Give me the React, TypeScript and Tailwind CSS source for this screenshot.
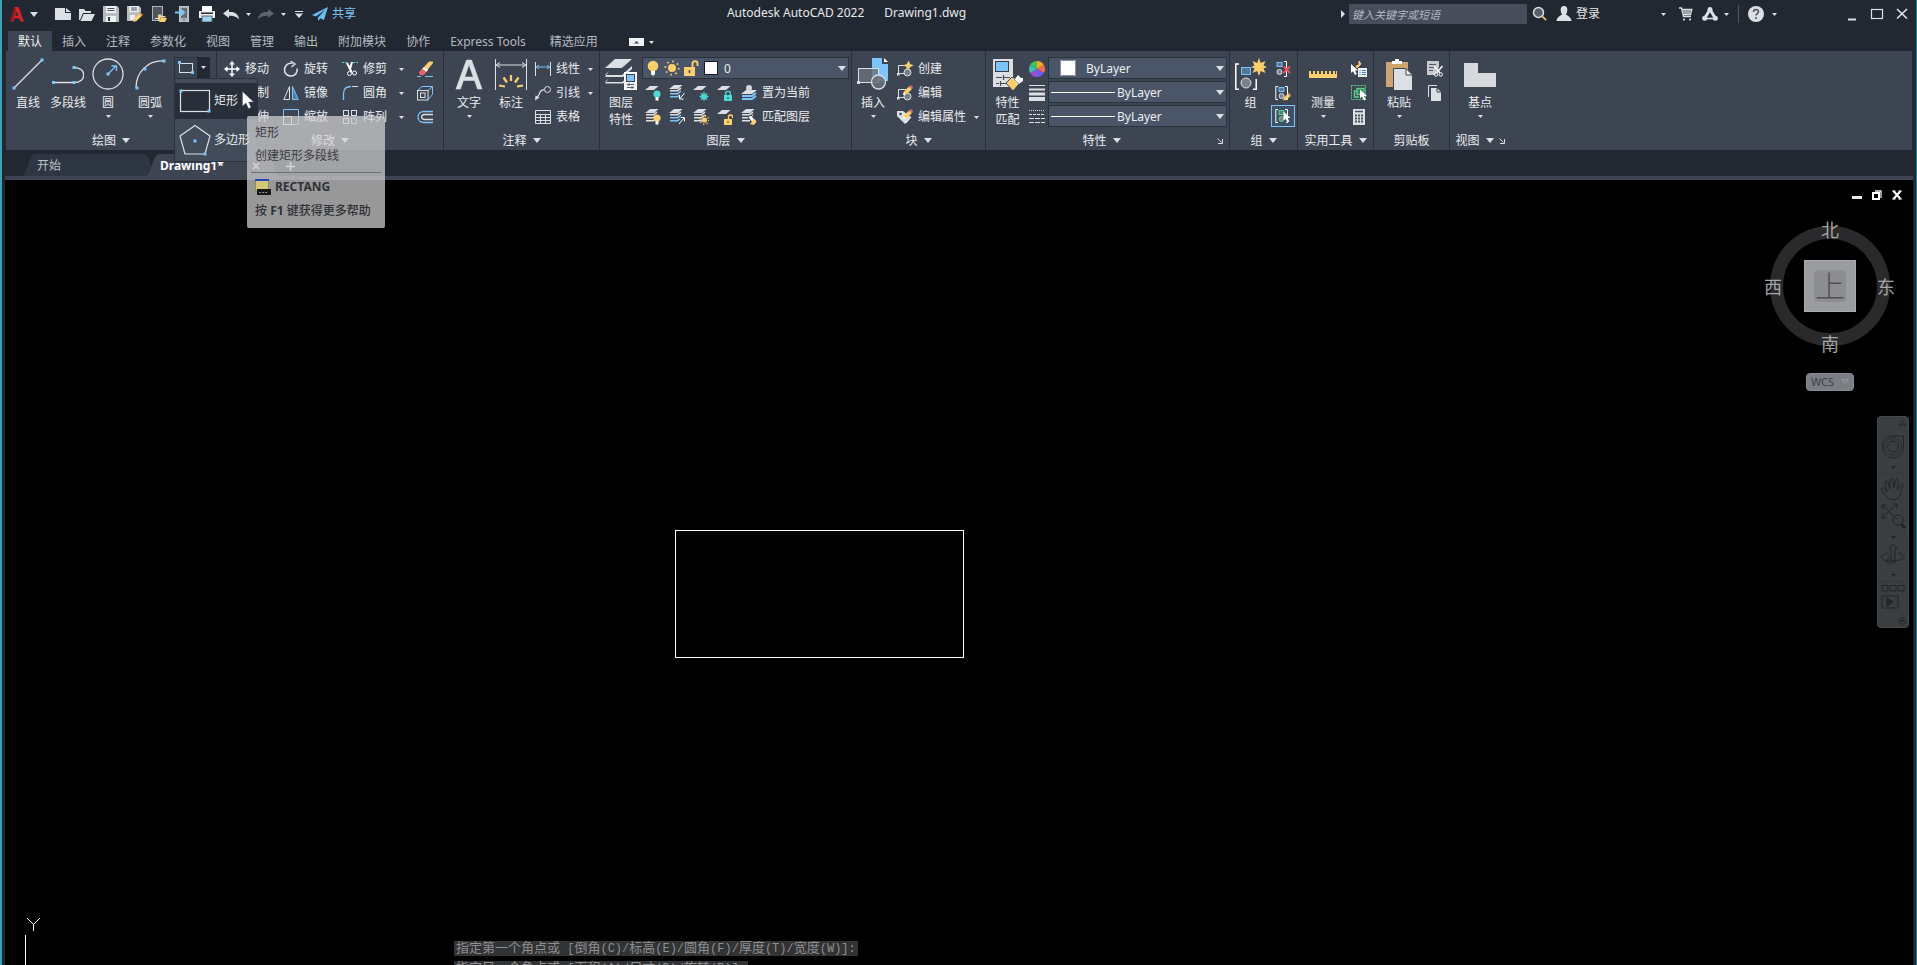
import React from "react";
import type { ReactNode } from "react";
import clsx from "clsx";

const LIGHT = "#dcdfe3";
const BLUE = "#7cc4fa";
const GOLD = "#fccf6e";
const TEAL = "#4fd6cf";
const GREEN = "#5bd08a";
const DARK = "#3e4552";

/* ---------- drawing helpers ---------- */

function Icon({ w = 16, h = w, children, className }: { w?: number; h?: number; children: ReactNode; className?: string }) {
  return (
    <svg width={w} height={h} viewBox={`0 0 ${w} ${h}`} fill="none" stroke={LIGHT} className={clsx("block shrink-0", className)} aria-hidden="true">
      {children}
    </svg>
  );
}

const Dot = ({ x, y }: { x: number; y: number }) => <rect x={x - 1.5} y={y - 1.5} width="3" height="3" fill={BLUE} stroke="none" />;

const Caret = ({ big = false }: { big?: boolean }) =>
  big ? (
    <Icon w={8} h={5}><path d="M0 0H8L4 5Z" fill={LIGHT} stroke="none" /></Icon>
  ) : (
    <Icon w={5} h={3}><path d="M0 0H5L2.5 3Z" fill={LIGHT} stroke="none" /></Icon>
  );

const Sheet = ({ y, fill = LIGHT }: { y: number; fill?: string }) => <path d={`M5 ${y}H13.5L9 ${y + 4}H0Z`} fill={fill} stroke="none" />;
const Stack = ({ blue = false }: { blue?: boolean }) => (
  <g>
    <Sheet y={0} />
    <path d="M1 5.7H8.6L12 3.2" strokeWidth="1.5" />
    <path d="M1 8.7H8.6L12 6" stroke={blue ? BLUE : LIGHT} strokeWidth="1.5" />
    <path d="M1 11.7H8.6L11 10" stroke={blue ? BLUE : LIGHT} strokeWidth="1.5" />
  </g>
);
const Bulb = ({ x, y, fill }: { x: number; y: number; fill: string }) => (
  <g stroke="none">
    <circle cx={x} cy={y} r="3.6" fill={fill} />
    <rect x={x - 1.5} y={y + 3} width="3" height="3.5" fill="#fff" />
  </g>
);
const Pencil = () => (
  <g stroke="none">
    <path d="M6 10L7 6.5L12 1.5L14.8 4.2L9.6 9.2Z" fill={GOLD} />
    <path d="M12 1.5L13.2 .4Q14 0 15 1L15.8 2Q16 2.6 15.6 3.2L14.8 4.2Z" fill="#ee6a5f" />
    <path d="M6 10L6.8 7.2L8.8 9.2Z" fill="#fff" />
  </g>
);
const Pointer = ({ x = 0, y = 0 }: { x?: number; y?: number }) => (
  <path d={`M${x} ${y}V${y + 9}L${x + 2} ${y + 7.2}L${x + 4} ${y + 11}L${x + 5.8} ${y + 10}L${x + 4} ${y + 6.4}H${x + 7}Z`} fill="#fff" stroke="none" />
);

/* ---------- title bar icons ---------- */

const LogoA = () => (
  <Icon w={14} h={15}>
    <path d="M4.6 0H8.6L14 14.6H10.3L9.2 11.2H4.5L3.4 14.6H0Z" fill="#d2232a" stroke="none" />
    <path d="M6.8 4.5L8.4 8.8H5.2Z" fill="#222831" stroke="none" />
    <path d="M4.6 0L0 14.6H2.2L6 4Z" fill="#8f171c" stroke="none" />
  </Icon>
);
const NewIcon = () => <Icon h={12}><path d="M0 0H10V5H16V12H0Z" fill={LIGHT} stroke="none" /><path d="M11 0L16 4H11Z" fill={LIGHT} stroke="none" /></Icon>;
const OpenIcon = () => <Icon h={13}><path d="M0 12V1H5L6.500 3H12V5H4L1 12Z" fill={LIGHT} stroke="none" /><path d="M4.600 6H16L12.500 13H1.500Z" fill={LIGHT} stroke="none" /></Icon>;
const Floppy = () => (
  <g stroke="none">
    <path d="M0 0H14L16 2V16H0Z" fill="#b9bdc3" />
    <rect x="3" y="0" width="10" height="7" fill="#f1f2f4" /><rect x="4.500" y="2" width="7" height="1" fill="#4a505c" /><rect x="4.500" y="4" width="7" height="1" fill="#4a505c" />
    <rect x="3" y="10" width="10" height="6" fill="#f1f2f4" /><rect x="5" y="11" width="2" height="4" fill="#30363f" />
  </g>
);
const SaveIcon = () => <Icon><Floppy /></Icon>;
const SaveAsIcon = () => (
  <Icon>
    <g stroke="none">
      <path d="M0 0H12L14 2V6L6 15H0Z" fill="#b9bdc3" /><rect x="2.500" width="9" height="6" fill="#f1f2f4" /><path d="M4 2H10M4 4H10" stroke="#4a505c" />
      <rect x="3" y="9" width="5" height="5" fill="#f1f2f4" />
      <path d="M6 16L7.200 12.500L12.500 7.200L15 9.700L9.600 15Z" fill={GOLD} /><path d="M12.500 7.200L13.600 6.200L16 8.700L15 9.700Z" fill="#ee8a4a" />
    </g>
  </Icon>
);
const OpenWebIcon = () => (
  <Icon w={16}>
    <rect x="1.500" y=".5" width="10" height="14" fill="#50565f" stroke="#aeb3ba" /><path d="M4 12.500H7" />
    <path d="M7 15V8.500H10L11 10H14.500V11.500H9.800L8 15Z" fill="#f4d39a" stroke="none" /><path d="M9.800 12H16L14 16H8Z" fill={GOLD} stroke="none" />
  </Icon>
);
const SaveWebIcon = () => (
  <Icon>
    <rect x="4.500" y=".5" width="9" height="15" fill="#aeb3ba" stroke="#c4c8cd" /><rect x="6" y="2" width="6" height="10" fill="#666d77" stroke="none" /><path d="M8 14H10" stroke="#50565f" />
    <path d="M0 5.500H6V2.500L10.500 6.500L6 10.500V7.500H0Z" fill={BLUE} stroke="none" />
  </Icon>
);
const PrintIcon = () => (
  <Icon>
    <g stroke="none"><rect x="3" width="10" height="5" fill="#fff" /><rect y="5" width="16" height="7" fill="#f1f2f4" /><rect x="2" y="6.500" width="12" height="1.500" fill="#222831" /><rect x="3" y="10" width="10" height="6" fill="#9ed4ef" stroke="#5a6370" /></g>
  </Icon>
);
const UndoIcon = ({ dim = false }: { dim?: boolean }) => (
  <Icon h={11} className={dim ? "-scale-x-100" : ""}>
    <path d="M0 4.500L6 0V3C12 2.500 15.500 5 16 10.500C13.500 7.500 11 6.500 6 6.700V9Z" fill={dim ? "#5f646c" : LIGHT} stroke="none" />
  </Icon>
);
const CustomizeIcon = () => <Icon w={8} h={7}><path d="M0 .5H8" /><path d="M0 2.500H8L4 7Z" fill={LIGHT} stroke="none" /></Icon>;
const PlaneIcon = () => <Icon h={14}><path d="M16 0L0 8L4 9.500L13.500 2.500L6 10.500V14L8.500 11.300L12 13Z" fill="#6cbcf4" stroke="none" /></Icon>;
const SearchIcon = () => <Icon><circle cx="6.500" cy="6.500" r="5" strokeWidth="1.500" fill="#5a6068" /><path d="M10.300 10.300L14 14" stroke="#d9c26a" strokeWidth="1.800" /></Icon>;
const UserIcon = () => <Icon><path d="M8 0C11 0 11.500 2.500 11.300 4.500C11.100 6.600 10.300 7.500 10 8.300C10 9.500 15 10 15.500 15H.5C1 10 6 9.500 6 8.300C5.700 7.500 4.900 6.600 4.700 4.500C4.500 2.500 5 0 8 0Z" fill={LIGHT} stroke="none" /></Icon>;
const CartIcon = () => <Icon w={14} h={14}><path d="M0 1H2.500L4.500 9.500H12M3 2.500H12.800L11.500 7.500H4" strokeWidth="1.300" /><path d="M3.500 3H12.300L11 7H4.500Z" fill="#9da1a8" stroke="none" /><circle cx="5" cy="12.500" r="1.100" fill={LIGHT} stroke="none" /><circle cx="11" cy="12.500" r="1.100" fill={LIGHT} stroke="none" /></Icon>;
const AppsIcon = () => <Icon h={14}><path d="M8 2.500L2.500 11.500M8 2.500L13.500 11.500" strokeWidth="3" /><path d="M2.500 11.500H13.500" strokeWidth="1.600" /><g fill={LIGHT} stroke="none"><circle cx="8" cy="2.500" r="2.500" /><circle cx="2.700" cy="11.300" r="2.500" /><circle cx="13.300" cy="11.300" r="2.500" /></g></Icon>;
const HelpIcon = () => <Icon><circle cx="8" cy="8" r="8" fill={LIGHT} stroke="none" /><path d="M5.500 6C5.500 2.800 10.500 2.800 10.500 5.800C10.500 7.700 8 7.600 8 9.600" stroke="#4b515b" strokeWidth="1.500" /><circle cx="8" cy="12" r="1" fill="#4b515b" stroke="none" /></Icon>;

/* ---------- large ribbon icons ---------- */

const LineIcon = () => <Icon w={32}><path d="M2 30L30 2" strokeWidth="1.300" /><Dot x={2} y={30} /><Dot x={30} y={2} /></Icon>;
const PolylineIcon = () => <Icon w={32}><path d="M2 24.500H22M22 9.500C35 9.500 35 24.500 22 24.500" strokeWidth="1.300" /><Dot x={1.500} y={24.500} /><Dot x={22} y={24.500} /><Dot x={22} y={9.500} /></Icon>;
const CircleIcon = () => <Icon w={32}><circle cx="16" cy="16" r="15" strokeWidth="1.300" /><path d="M16 16L24 8M19.500 8H24.500V13" stroke={BLUE} strokeWidth="1.300" /><Dot x={16} y={16} /></Icon>;
const ArcIcon = () => <Icon w={32}><path d="M2 30C2 14 14 2 30 3" strokeWidth="1.300" /><Dot x={3} y={30} /><Dot x={11} y={11} /><Dot x={30} y={3} /></Icon>;
const TextIcon = () => <Icon w={32}><path d="M13.500 2H18.500L29 31H24.500L21.600 22.500H10.400L7.500 31H3ZM16 6.500L11.700 19H20.300Z" fill={LIGHT} fillRule="evenodd" stroke={LIGHT} strokeWidth=".6" /></Icon>;
const DimIcon = () => (
  <Icon w={32}>
    <path d="M.5 1V32M31.500 1V32M2 7H30M5 4.500L1 7L5 9.500M27 4.500L31 7L27 9.500" />
    <path d="M16 17V23M8.500 19.500L12 24.500M23.500 19.500L20 24.500M4 27.500L10 28.500M28 27.500L22 28.500" stroke={GOLD} strokeWidth="2.200" />
  </Icon>
);
const LayerPropsIcon = () => (
  <Icon w={32}>
    <path d="M10 1H27L17 10H0Z" fill={LIGHT} stroke="none" />
    <path d="M4 13L0 17H17L27 8V11L18 19H0ZM4 20L0 24H17L22 20V22L18 25.500H0" fill={LIGHT} stroke="none" />
    <path d="M0 13L3 11.500H15.500L26 3.500" stroke={DARK} strokeWidth="1" />
    <rect x="19.500" y="14.500" width="12" height="17" fill="#f1f2f4" stroke="#fff" /><rect x="21.500" y="16.500" width="8" height="7" fill={BLUE} stroke={DARK} />
    <path d="M22 26.500H29M22 29.500H29M24 25V28M27 28V31" stroke="#59606c" />
  </Icon>
);
const InsertIcon = () => (
  <Icon w={32}>
    <path d="M15 0H25V6H31V23H15Z" fill={BLUE} stroke="none" /><path d="M27 0L31 4H27Z" fill="#fff" stroke="none" />
    <rect x="1.500" y="10.500" width="20" height="14" fill="#68707ccc" /><circle cx="21.500" cy="24" r="7" fill="#68707cdd" strokeWidth="1.300" />
    <rect x="0" y="23" width="3" height="3" fill={LIGHT} stroke="none" />
  </Icon>
);
const MatchIcon = () => (
  <Icon w={32}>
    <rect x="1" y="1" width="20" height="28" fill={LIGHT} stroke="none" /><rect x="3.500" y="3.500" width="13" height="10" fill={BLUE} stroke="#353c48" />
    <path d="M4 19.500H10M12 19.500H18M4 25.500H7M9 25.500H14M11.500 17V22M8.500 23V28" stroke="#454c58" strokeWidth="1.200" />
    <path d="M14 25L20 19L27 26L21 33Z" fill={GOLD} stroke={DARK} /><path d="M20 19L23 21L26 17L29 20L31 20L31 23L27 26Z" fill="#fff" stroke="none" />
  </Icon>
);
const GroupIcon = () => (
  <Icon w={32}>
    <path d="M4 6H.8V31.200H4M18 31.200H21.200V21" strokeWidth="1.500" stroke="#fff" />
    <rect x="6.500" y="9.500" width="9" height="7" stroke={BLUE} fill="#54789a" /><circle cx="11" cy="25" r="5" fill="#7b818b" />
    <path d="M24 0L25.800 5L30.500 3L28.500 7.500L32 9L28.500 10.500L30.500 15L25.800 13L24 18L22.200 13L17.500 15L19.500 10.500L16 9L19.500 7.500L17.500 3L22.200 5Z" fill={GOLD} stroke="none" />
  </Icon>
);
const MeasureIcon = () => <Icon w={32}><path d="M2 13H4V16H6V13H8V16H10V13H12V16H14V13H16V16H18V13H20V16H22V13H24V16H26V13H28V16H29V13H30V20H2Z" fill={GOLD} stroke="none" /></Icon>;
const PasteIcon = () => (
  <Icon w={32}>
    <path d="M3 4H25V29H3Z" fill="#cfa56d" stroke="none" /><path d="M9 6V3H12V1H16V3H19V6Z" fill="#fff" stroke="none" />
    <path d="M10.500 10.500H22.500L29.500 17V33H10.500Z" fill={LIGHT} stroke={DARK} /><path d="M23 10.500V17H29.500Z" fill="#fff" stroke={DARK} />
  </Icon>
);
const BaseIcon = () => <Icon w={32}><path d="M0 5H14V15H32V29H0Z" fill="#d7d9dc" stroke="none" /></Icon>;

/* ---------- small ribbon icons ---------- */

const RectSmall = () => <Icon><rect x="1.500" y="3.500" width="13" height="9" /><Dot x={1.500} y={2.500} /><Dot x={14.500} y={12.500} /></Icon>;
const MoveIcon = () => <Icon><path d="M8 2V14M2 8H14" strokeWidth="1.500" stroke="#fff" /><path d="M8 0L11 3.500H5ZM8 16L11 12.500H5ZM0 8L3.500 5V11ZM16 8L12.500 5V11Z" fill="#fff" stroke="none" /></Icon>;
const CopyIcon = () => <Icon><circle cx="5" cy="8" r="4" /><circle cx="11" cy="8" r="4" stroke={BLUE} /></Icon>;
const StretchIcon = () => <Icon><path d="M1 4H10V13H1Z" /><path d="M10 4L15 13H10" stroke={BLUE} /></Icon>;
const RotateIcon = () => <Icon><path d="M9.500 2.500C4.500 1.500 1.500 5 1.500 9C1.500 12.500 4.500 15 8 15C12 15 15 11.500 14 7.500" strokeWidth="1.600" /><path d="M7.500 0L12 3L8.500 6" strokeWidth="1.400" /></Icon>;
const MirrorIcon = () => <Icon><path d="M6.500 1.500V14.500H.8Z" /><path d="M9.500 1.500V14.500H15.200Z" stroke={BLUE} fill="#4d7fa8" /></Icon>;
const ScaleIcon = () => <Icon><path d="M.5 7V.5H15.500V15.500H9" stroke={BLUE} /><rect x=".5" y="7.500" width="8" height="8" /></Icon>;
const TrimIcon = () => <Icon><path d="M0 1.500H5M11 1.500H16" stroke={TEAL} strokeDasharray="2 1" /><path d="M5 2L9.500 11M10 1L8 8" stroke="#fff" strokeWidth="2" /><circle cx="7.500" cy="12.500" r="2" stroke="#fff" /><circle cx="12.500" cy="12" r="2" stroke="#fff" /></Icon>;
const FilletIcon = () => <Icon><path d="M1.500 15V9C1.500 4 4 1.500 9 1.500" stroke={BLUE} strokeWidth="1.300" /><path d="M10 1.500H16" /></Icon>;
const ArrayIcon = () => <Icon><rect x="1.500" y="1.500" width="5" height="5" /><rect x="9.500" y="1.500" width="5" height="5" /><rect x="1.500" y="9.500" width="5" height="5" /><rect x="9.500" y="9.500" width="5" height="5" stroke={BLUE} /></Icon>;
const EraseIcon = () => <Icon><path d="M0 15.500H4M8 15.500H16" stroke={BLUE} /><path d="M2 11.500L12 .5H16V2L7 13.500Z" fill={GOLD} stroke="none" /><path d="M2 11.500L5.500 7.700L9.500 10.700L7 13.800Q4.500 15 2.500 13.500Z" fill="#ee5f68" stroke="none" /><path d="M5.500 7.700L7 6L11 8.800L9.500 10.700Z" fill="#fff" stroke="none" /></Icon>;
const ExplodeIcon = () => <Icon><path d="M.5 5.500L5 1.500H15.500V9.500L11.500 14M11 5.500L15.500 1.500" stroke={BLUE} /><rect x=".5" y="5.500" width="10.500" height="9.500" /><rect x="3.500" y="8" width="4.500" height="4.500" /></Icon>;
const OffsetIcon = () => <Icon><path d="M16 2.500H7C-1 2.500 -1 13.500 7 13.500H16" stroke={BLUE} strokeWidth="1.300" /><path d="M16 5.500H8C3.500 5.500 3.500 10.500 8 10.500H16" strokeWidth="1.300" /></Icon>;
const LinearIcon = () => <Icon><path d="M.5 1V15M15.500 1V15" /><path d="M1 6H15M4 4L1.500 6L4 8M12 4L14.500 6L12 8" stroke={BLUE} /></Icon>;
const LeaderIcon = () => <Icon><circle cx="12.500" cy="4.500" r="3" /><path d="M9.500 5C6 4.500 5.500 6 4 9.500L1.500 13.500" strokeWidth="1.300" /><path d="M0 15.500L.5 10.500L4.500 12.500Z" fill={LIGHT} stroke="none" /></Icon>;
const TableIcon = () => <Icon><path d="M.5 1.500H15.500V14.500H.5ZM.5 5.500H15.500M.5 8.500H15.500M.5 11.500H15.500M5.500 5V14.500M10.500 5V14.500" /></Icon>;

const LayOff = () => <Icon><Sheet y={1} /><Bulb x={12} y={9} fill={TEAL} /></Icon>;
const LayIsolate = () => <Icon><Stack blue /><path d="M15.500 8L11 13.500M10.500 10V14H14.500" stroke="#fff" /></Icon>;
const LayFreeze = () => <Icon><Sheet y={1} /><path d="M11 7V16M6.500 11.500H15.500M8 8.500L14 14.500M14 8.500L8 14.500" stroke={TEAL} strokeWidth="1.300" /><circle cx="11" cy="11.500" r="2.500" stroke={TEAL} /></Icon>;
const Lock = ({ color, open = false }: { color: string; open?: boolean }) => <g><rect x="7" y="10" width="8" height="6" fill={color} stroke="none" /><path d={open ? "M11.500 10V7.500C11.500 5.500 15.500 5.500 15.500 7.500V9" : "M8.700 10V8C8.700 5.800 13.300 5.800 13.300 8V10"} stroke={color} strokeWidth="1.400" /><path d="M11 12V14" stroke={DARK} /></g>;
const LayLock = () => <Icon><Sheet y={1} /><Lock color={TEAL} /></Icon>;
const LayCurrent = () => <Icon><path d="M5 5H16L11 9H0Z" fill={LIGHT} stroke="none" /><circle cx="8" cy="3" r="3" fill="#d4d7db" stroke="none" /><path d="M1 11H11L15 8M1 14H11L15 11" stroke={BLUE} strokeWidth="2" /></Icon>;
const LayOn = () => <Icon><Stack /><Bulb x={12} y={9} fill={GOLD} /></Icon>;
const LayUniso = () => <Icon><Stack blue /><path d="M10 15L15 9M11.500 8.500H15.500V12.500" stroke="#fff" /></Icon>;
const LayThaw = () => <Icon><Stack /><circle cx="11.500" cy="11" r="2.600" fill={GOLD} stroke="none" /><circle cx="11.500" cy="11" r="4.300" stroke={GOLD} strokeDasharray="1.200 2.170" strokeWidth="1.400" /></Icon>;
const LayUnlock = () => <Icon><Sheet y={1} /><Lock color={GOLD} open /></Icon>;
const LayMatch = () => <Icon><Stack /><path d="M7 8L10 6L16 13L13 16Z" fill="#fff" stroke={DARK} /><path d="M9 15L13 10L15.500 12L13 16Z" fill={GOLD} stroke="none" /></Icon>;

const BlockBase = () => <g><path d="M1.500 4.500H10V12.500H1.500Z" /><circle cx="10.500" cy="11.500" r="3.500" fill="#777e89" /><rect x="0" y="12" width="2.500" height="2.500" fill={LIGHT} stroke="none" /></g>;
const Star = ({ x, y }: { x: number; y: number }) => <path d={`M${x} ${y - 4.500}L${x + 1.200} ${y - 1.500}L${x + 4.500} ${y}L${x + 1.200} ${y + 1.500}L${x} ${y + 4.500}L${x - 1.200} ${y + 1.500}L${x - 4.500} ${y}L${x - 1.200} ${y - 1.500}Z`} fill={GOLD} stroke={GOLD} strokeWidth=".6" />;
const CreateIcon = () => <Icon><BlockBase /><Star x={11.500} y={4.500} /></Icon>;
const EditIcon = () => <Icon><BlockBase /><Pencil /></Icon>;
const EditAttrIcon = () => <Icon><path d="M0 2H6L14 8L8 15L0 7Z" fill={LIGHT} stroke="none" /><path d="M14 8L9 14" stroke="#fff" /><circle cx="3.500" cy="5" r="1.300" fill={DARK} stroke="none" /><Pencil /></Icon>;

const ColorWheel = () => (
  <Icon>
    <g stroke="none">
      <path d="M8 8V0A8 8 0 0 1 14.900 4Z" fill="#f5a623" /><path d="M8 8L14.900 4A8 8 0 0 1 14.900 12Z" fill="#f26b4e" /><path d="M8 8L14.900 12A8 8 0 0 1 8 16Z" fill="#6a5cf0" />
      <path d="M8 8V16A8 8 0 0 1 1.100 12Z" fill="#9c4dd6" /><path d="M8 8L1.100 12A8 8 0 0 1 1.100 4Z" fill="#38c0b0" /><path d="M8 8L1.100 4A8 8 0 0 1 8 0Z" fill="#3fbf64" />
    </g>
  </Icon>
);
const WeightIcon = () => <Icon><path d="M0 .5H16" /><path d="M0 4.500H16" strokeWidth="2" /><path d="M0 9H16" strokeWidth="3" /><path d="M0 14H16" strokeWidth="4" /></Icon>;
const LinetypeIcon = () => <Icon><path d="M0 1.500H16" strokeDasharray="1 1" /><path d="M0 5.500H16" strokeDasharray="3 1" /><path d="M0 9.500H16M0 13.500H16" strokeDasharray="5 1" /></Icon>;

const MiniGroup = ({ color = BLUE }: { color?: string }) => <g><path d="M3 1.500H.8V14.500H3M11 14.500H12.500V1.500H10" stroke="#fff" /><rect x="4" y="2.500" width="5" height="4" stroke={color} fill={`${color}66`} /><circle cx="6.500" cy="11" r="2.500" stroke={color === BLUE ? LIGHT : color} fill="#7b818b" /></g>;
const UngroupIcon = () => <Icon><rect x="2" y="1.500" width="5" height="4" stroke={BLUE} fill={`${BLUE}66`} /><circle cx="4.500" cy="11" r="2.500" fill="#7b818b" /><path d="M9 .5H11.500V15.500H9" stroke="#fff" /><path d="M8.500 5.500L15 12M15 5.500L8.500 12" stroke="#f0525a" strokeWidth="1.900" /></Icon>;
const GroupEditIcon = () => <Icon><MiniGroup /><path d="M8 15.500L9 12.500L13 8.500L15.500 11L11 15Z" fill={GOLD} stroke="none" /><path d="M13 8.500L14 7.500L16 10L15.500 11Z" fill="#ee6a5f" stroke="none" /></Icon>;
const GroupSelIcon = () => <Icon><MiniGroup color={GREEN} /><Pointer x={8.500} y={3.500} /></Icon>;
const QuickSelIcon = () => <Icon><Pointer x={0} y={3} /><path d="M8 0L10 3L6 7L5 5L8 4Z" fill={GOLD} stroke={GOLD} /><rect x="7" y="7" width="9" height="9" fill="#f1f2f4" stroke="none" /><path d="M8.500 9.500H9.500M11 9.500H15M8.500 11.500H9.500M11 11.500H15M8.500 13.500H9.500M11 13.500H15" stroke="#3f86bd" /></Icon>;
const SelAllIcon = () => <Icon><rect x=".5" y=".5" width="14" height="14" stroke={GREEN} strokeDasharray="2 1" /><rect x="6" y="3.500" width="7" height="6" fill="#387e66" stroke={GREEN} strokeWidth="1.300" /><path d="M6 6H3.500V12H8" stroke={GREEN} strokeWidth="1.500" /><Pointer x={9} y={4.500} /></Icon>;
const CalcIcon = () => <Icon><rect x="2" width="12" height="16" fill={LIGHT} stroke="none" /><path d="M4 2.500H12" stroke="#4b515b" strokeWidth="1.500" /><path d="M4 6.500H12M4 9.500H12M4 12.500H12" stroke="#4b515b" strokeWidth="2" strokeDasharray="2 1" /></Icon>;
const CutIcon = () => <Icon><path d="M0 0H12V6L8 14H0Z" fill="#c6cacf" stroke="none" /><path d="M2 3.500H9M2 6.500H7M2 9.500H6" stroke="#505763" /><path d="M7 5L13 12M15.500 5L9.500 12" stroke="#fff" strokeWidth="1.500" /><circle cx="9" cy="13.500" r="1.700" stroke="#fff" /><circle cx="13.800" cy="13.500" r="1.700" stroke="#fff" /></Icon>;
const CopyClipIcon = () => <Icon><path d="M1.500 12V.5H10" /><path d="M4 3H10L14 7V16H4Z" fill={LIGHT} stroke="none" /><path d="M10 3V7H14" stroke={DARK} /></Icon>;
const Launcher = () => <Icon w={6} h={6}><path d="M.5 .5L4.500 4.500M5.500 1V5.500H1" /></Icon>;

/* ---------- ribbon building blocks ---------- */

function Panel({ title, width, menu = true, launcher, children, last }: { title: string; width: string; menu?: boolean; launcher?: boolean; children: ReactNode; last?: boolean }) {
  return (
    <section aria-label={title} className={clsx("flex shrink-0 flex-col pt-1.5", width, !last && "border-r border-[#2a303b]")}>
      <div className="flex h-[72px] items-start">{children}</div>
      <div className="flex h-[21px] items-center pt-0.5">
        <button type="button" className="flex flex-1 items-center justify-center gap-1.5 leading-4 whitespace-nowrap">
          {title}
          {menu && <Caret big />}
        </button>
        {launcher && <button type="button" aria-label={`${title} 设置`} className="mr-1 flex h-4 w-2 items-center"><Launcher /></button>}
      </div>
    </section>
  );
}

function Big({ icon, label, second, width, caret }: { icon: ReactNode; label: string; second?: string; width: string; caret?: boolean }) {
  return (
    <button type="button" className={clsx("flex shrink-0 flex-col items-center pt-px", width)}>
      {icon}
      <span className="mt-1 leading-[17px] whitespace-nowrap">{label}</span>
      {second && <span className="leading-[17px] whitespace-nowrap">{second}</span>}
      {caret && <span className="mt-1"><Caret /></span>}
    </button>
  );
}

function Small({ icon, label, caret }: { icon: ReactNode; label?: string; caret?: boolean }) {
  return (
    <button type="button" className="flex h-6 w-full items-center gap-[5px] whitespace-nowrap">
      {icon}
      {label && <span className="leading-4">{label}</span>}
      {caret && <span className="ml-auto"><Caret /></span>}
    </button>
  );
}

const Col = ({ className, children }: { className: string; children: ReactNode }) => <div className={clsx("flex shrink-0 flex-col", className)}>{children}</div>;

function Combo({ label, options, pad, children }: { label: string; options: string[]; pad: string; children?: ReactNode }) {
  return (
    <div className="relative h-[22px] w-full">
      <select aria-label={label} className={clsx("h-full w-full appearance-none border border-[#2b323e] bg-[#4a5567] pt-px leading-4 text-[#eceef1]", pad)}>
        {options.map((o) => <option key={o}>{o}</option>)}
      </select>
      <div className="pointer-events-none absolute inset-0 flex items-center pr-[3px]">
        {children}
        <span className="ml-auto"><Caret big /></span>
      </div>
    </div>
  );
}

const SunIcon = () => <Icon><circle cx="8" cy="8" r="4" fill={GOLD} stroke="none" /><circle cx="8" cy="8" r="6.700" stroke={GOLD} strokeWidth="1.800" strokeDasharray="1.600 3.660" /></Icon>;
const BulbIcon = () => <Icon><circle cx="8" cy="6" r="5.300" fill={GOLD} stroke="none" /><path d="M6 11H10V14Q8 17 6 14Z" fill="#fff" stroke="none" /></Icon>;
const UnlockIcon = () => <Icon><rect x="1" y="7" width="11" height="9" fill={GOLD} stroke="none" /><path d="M9.500 7V3.500C9.500 .5 14.500 .5 14.500 3.500V6" stroke={GOLD} strokeWidth="1.900" /><path d="M6.500 10V13" stroke={DARK} strokeWidth="1.500" /></Icon>;

/* ---------- shape flyout and its tooltip ---------- */

function Tooltip() {
  return (
    <div role="tooltip" className="absolute top-[37px] left-[72px] z-20 w-[138px] rounded-[2px] bg-[rgba(210,210,210,0.72)] px-2 pt-2 pb-2 text-[#3a3c42]">
      <p className="leading-[18px]">矩形</p>
      <p className="mt-[5px] leading-[18px] whitespace-nowrap">创建矩形多段线</p>
      <div className="-mx-1 mt-[7px] border-t border-[#6f7278]" />
      <div className="mt-[5px] flex items-center gap-1 font-bold text-[#303238]">
        <Icon>
          <rect x=".5" y="1" width="13" height="11" fill="#d2c67a" stroke="#8f8a63" /><path d="M0 1H14" stroke="#2347b5" strokeWidth="2" /><rect x="2" y="10" width="14" height="6" fill="#17181b" stroke="none" /><path d="M4 13.500H12" stroke="#8c8c8c" strokeDasharray="2 1" />
        </Icon>
        <span className="leading-[18px]">RECTANG</span>
      </div>
      <p className="mt-1.5 leading-[18px] font-medium whitespace-nowrap text-[#303238]">按 <b>F1</b> 键获得更多帮助</p>
    </div>
  );
}

function ShapeMenu() {
  return (
    <div className="relative ml-0.5 flex w-9 shrink-0 flex-col">
      <div className="flex h-[21px]">
        <button type="button" aria-label="矩形" className="flex w-[23px] items-center justify-center border-t border-l border-[#2b323e] bg-[#3a4250]"><RectSmall /></button>
        <button type="button" aria-label="更多形状" className="flex w-[13px] items-center justify-center bg-[#222834]"><Caret /></button>
      </div>
      <div role="menu" className="absolute top-[21px] left-0 z-10 w-[84px] border border-[#2b323e] bg-[#424b5a] pt-1">
        <button type="button" role="menuitem" className="flex h-9 w-full items-center gap-[3px] bg-[#282f3b] pl-1 whitespace-nowrap">
          <Icon w={32} h={24}><rect x="1.500" y="1.500" width="29" height="21" strokeWidth="1.200" /><Dot x={2} y={2} /><Dot x={30} y={22} /></Icon>
          <span className="leading-4">矩形</span>
        </button>
        <button type="button" role="menuitem" className="flex h-[42px] w-full items-center gap-[3px] pl-1 whitespace-nowrap">
          <Icon w={32}><path d="M16 1.500L31 12L26 30H6L1 12Z" strokeWidth="1.200" /><Dot x={16} y={17} /><Dot x={26} y={30} /></Icon>
          <span className="leading-4">多边形</span>
        </button>
        <svg width="12" height="19" viewBox="0 0 12 19" className="pointer-events-none absolute top-3 left-[67px] z-30" aria-hidden="true">
          <path d="M.5 .5V15L4 12L6.500 17.500L9 16.500L6.700 11H11.500Z" fill="#fff" stroke="#555" strokeWidth=".4" />
        </svg>
        <Tooltip />
      </div>
    </div>
  );
}

/* ---------- page sections ---------- */

function IconButton({ label, width = "w-6", children }: { label: string; width?: string; children: ReactNode }) {
  return <button type="button" aria-label={label} className={clsx("flex h-6 shrink-0 items-center justify-center", width)}>{children}</button>;
}

function TitleBar() {
  return (
    <header className="flex h-7 items-center pl-2 text-[#e6e8eb]">
      <button type="button" aria-label="应用程序菜单" className="mr-[14px] flex w-[27px] items-center gap-1.5"><LogoA /><Caret big /></button>
      <IconButton label="新建"><NewIcon /></IconButton>
      <IconButton label="打开"><OpenIcon /></IconButton>
      <IconButton label="保存"><SaveIcon /></IconButton>
      <IconButton label="另存为"><SaveAsIcon /></IconButton>
      <IconButton label="从 Web 打开"><OpenWebIcon /></IconButton>
      <IconButton label="保存到 Web"><SaveWebIcon /></IconButton>
      <IconButton label="打印"><PrintIcon /></IconButton>
      <IconButton label="放弃"><UndoIcon /></IconButton>
      <IconButton label="放弃列表" width="w-[11px]"><Caret /></IconButton>
      <IconButton label="重做"><UndoIcon dim /></IconButton>
      <IconButton label="重做列表" width="w-[11px]"><Caret /></IconButton>
      <IconButton label="自定义快速访问工具栏" width="w-5"><CustomizeIcon /></IconButton>
      <button type="button" className="ml-[3px] flex items-center gap-1 text-[#7cc4fa]"><PlaneIcon />共享</button>
      <h1 className="flex min-w-0 flex-1 justify-center gap-5 pb-0.5 whitespace-nowrap"><span>Autodesk AutoCAD 2022</span><span>Drawing1.dwg</span></h1>
      <IconButton label="展开搜索" width="w-3"><Icon w={4} h={8}><path d="M0 0L4 4L0 8Z" fill={LIGHT} stroke="none" /></Icon></IconButton>
      <input type="search" aria-label="搜索" placeholder="键入关键字或短语" className="mr-px h-5 w-[178px] shrink-0 bg-[#474d5b] px-[3px] text-[11px] italic placeholder:text-[#b3b8c1]" />
      <IconButton label="搜索"><SearchIcon /></IconButton>
      <button type="button" className="flex w-[122px] shrink-0 items-center gap-1 pl-1"><UserIcon />登录<span className="ml-auto pr-2"><Caret /></span></button>
      <IconButton label="购物车"><CartIcon /></IconButton>
      <IconButton label="Autodesk App Store"><AppsIcon /></IconButton>
      <IconButton label="应用列表" width="w-2"><Caret /></IconButton>
      <span className="mr-[5px] ml-2 h-[18px] w-px shrink-0 bg-[#4f5560]" />
      <IconButton label="帮助"><HelpIcon /></IconButton>
      <IconButton label="帮助列表" width="w-3"><Caret /></IconButton>
      <div className="mr-0.5 ml-[59px] flex shrink-0">
        <IconButton label="最小化" width="w-[25px]"><Icon w={14}><path d="M3 12.500H11" strokeWidth="2" /></Icon></IconButton>
        <IconButton label="最大化" width="w-[25px]"><Icon w={14}><rect x="1.500" y="2.500" width="11" height="9" strokeWidth="1.200" /></Icon></IconButton>
        <IconButton label="关闭" width="w-[25px]"><Icon w={14}><path d="M2 2L12 11.500M12 2L2 11.500" strokeWidth="1.700" /></Icon></IconButton>
      </div>
    </header>
  );
}

const TABS = ["默认", "插入", "注释", "参数化", "视图", "管理", "输出", "附加模块", "协作", "Express Tools", "精选应用"];

function RibbonTabs() {
  return (
    <nav className="mt-[3px] flex h-5 items-center pl-1.5">
      {TABS.map((t, i) => (
        <button key={t} type="button" className={clsx("h-full pt-0.5 pl-2.5 whitespace-nowrap", t === "Express Tools" ? "pr-3.5" : "pr-2.5", i === 0 ? "bg-[#3e4552] text-[#eceef1]" : "text-[#b4b9c1]")}>{t}</button>
      ))}
      <button type="button" aria-label="最小化功能区" className="ml-[21px] flex items-center gap-[5px] pt-0.5">
        <Icon w={15} h={8}><rect width="15" height="8" fill="#f1f2f4" stroke="none" /><path d="M5 5.500H10L7.500 3Z" fill="#3a404b" stroke="none" /></Icon>
        <Caret />
      </button>
    </nav>
  );
}

function Ribbon() {
  return (
    <div className="mx-1 flex bg-[#3e4552] text-[#e9ebee]">
      <Panel title="绘图" width="w-[211px]">
        <span className="w-0.5 shrink-0" />
        <Big icon={<LineIcon />} label="直线" width="w-10" />
        <Big icon={<PolylineIcon />} label="多段线" width="w-10" />
        <Big icon={<CircleIcon />} label="圆" width="w-10" caret />
        <Big icon={<ArcIcon />} label="圆弧" width="w-11" caret />
        <ShapeMenu />
      </Panel>
      <Panel title="修改" width="w-[227px]">
        <Col className="ml-[7px] w-[59px]">
          <Small icon={<MoveIcon />} label="移动" />
          <Small icon={<CopyIcon />} label="复制" />
          <Small icon={<StretchIcon />} label="拉伸" />
        </Col>
        <Col className="w-[59px]">
          <Small icon={<RotateIcon />} label="旋转" />
          <Small icon={<MirrorIcon />} label="镜像" />
          <Small icon={<ScaleIcon />} label="缩放" />
        </Col>
        <Col className="w-[62px]">
          <Small icon={<TrimIcon />} label="修剪" caret />
          <Small icon={<FilletIcon />} label="圆角" caret />
          <Small icon={<ArrayIcon />} label="阵列" caret />
        </Col>
        <Col className="ml-[13px] w-4">
          <Small icon={<EraseIcon />} />
          <Small icon={<ExplodeIcon />} />
          <Small icon={<OffsetIcon />} />
        </Col>
      </Panel>
      <Panel title="注释" width="w-[156px]">
        <Big icon={<TextIcon />} label="文字" width="w-[50px]" caret />
        <Big icon={<DimIcon />} label="标注" width="w-[34px]" />
        <Col className="ml-[7px] w-[58px]">
          <Small icon={<LinearIcon />} label="线性" caret />
          <Small icon={<LeaderIcon />} label="引线" caret />
          <Small icon={<TableIcon />} label="表格" />
        </Col>
      </Panel>
      <Panel title="图层" width="w-[252px]">
        <Big icon={<LayerPropsIcon />} label="图层" second="特性" width="w-[42px]" />
        <Col className="w-[207px]">
          <Combo label="图层" options={["0"]} pad="pl-[81px]">
            <div className="flex items-center gap-[3px] pl-[3px]">
              <BulbIcon /><SunIcon /><UnlockIcon />
              <span className="ml-0.5 h-[14px] w-[14px] border border-[#14181f] bg-white" />
            </div>
          </Combo>
          <div className="mt-0.5 flex h-6 items-center gap-2 pl-[3px]">
            <button type="button" aria-label="关"><LayOff /></button>
            <button type="button" aria-label="隔离"><LayIsolate /></button>
            <button type="button" aria-label="冻结"><LayFreeze /></button>
            <button type="button" aria-label="锁定"><LayLock /></button>
            <button type="button" className="flex items-center gap-[5px]"><LayCurrent />置为当前</button>
          </div>
          <div className="flex h-6 items-center gap-2 pl-[3px]">
            <button type="button" aria-label="打开所有图层"><LayOn /></button>
            <button type="button" aria-label="取消隔离"><LayUniso /></button>
            <button type="button" aria-label="解冻所有图层"><LayThaw /></button>
            <button type="button" aria-label="解锁"><LayUnlock /></button>
            <button type="button" className="flex items-center gap-[5px]"><LayMatch />匹配图层</button>
          </div>
        </Col>
      </Panel>
      <Panel title="块" width="w-[134px]">
        <Big icon={<InsertIcon />} label="插入" width="w-[42px]" caret />
        <Col className="ml-[3px] w-[82px]">
          <Small icon={<CreateIcon />} label="创建" />
          <Small icon={<EditIcon />} label="编辑" />
          <Small icon={<EditAttrIcon />} label="编辑属性" caret />
        </Col>
      </Panel>
      <Panel title="特性" width="w-[244px]" launcher>
        <Big icon={<MatchIcon />} label="特性" second="匹配" width="w-[43px]" />
        <Col className="w-[19px]">
          <Small icon={<ColorWheel />} />
          <Small icon={<WeightIcon />} />
          <Small icon={<LinetypeIcon />} />
        </Col>
        <Col className="w-[179px] gap-0.5">
          <Combo label="对象颜色" options={["ByLayer"]} pad="pl-[37px]">
            <span className="ml-3 h-4 w-4 border border-[#8c929c] bg-white" />
          </Combo>
          <Combo label="线宽" options={["ByLayer"]} pad="pl-[68px]"><span className="ml-[3px] h-px w-16 bg-white" /></Combo>
          <Combo label="线型" options={["ByLayer"]} pad="pl-[68px]"><span className="ml-[3px] h-px w-16 bg-white" /></Combo>
        </Col>
      </Panel>
      <Panel title="组" width="w-[68px]">
        <Big icon={<GroupIcon />} label="组" width="w-[41px]" />
        <Col className="w-6">
          <button type="button" aria-label="解除编组" className="flex h-6 items-center justify-center"><UngroupIcon /></button>
          <button type="button" aria-label="组编辑" className="flex h-6 items-center justify-center"><GroupEditIcon /></button>
          <button type="button" aria-label="启用组选择" className="flex h-[22px] items-center justify-center border border-[#7cc4fa] bg-[#3d5066]"><GroupSelIcon /></button>
        </Col>
      </Panel>
      <Panel title="实用工具" width="w-[76px]">
        <Big icon={<MeasureIcon />} label="测量" width="w-[50px]" caret />
        <Col className="ml-[3px] w-4">
          <Small icon={<QuickSelIcon />} />
          <Small icon={<SelAllIcon />} />
          <Small icon={<CalcIcon />} />
        </Col>
      </Panel>
      <Panel title="剪贴板" width="w-[76px]" menu={false}>
        <Big icon={<PasteIcon />} label="粘贴" width="w-[50px]" caret />
        <Col className="ml-[3px] w-4">
          <Small icon={<CutIcon />} />
          <Small icon={<CopyClipIcon />} />
        </Col>
      </Panel>
      <Panel title="视图" width="w-[61px]" launcher last>
        <Big icon={<BaseIcon />} label="基点" width="w-[60px]" caret />
      </Panel>
    </div>
  );
}

function FileTabs() {
  return (
    <div className="mx-[3px] flex h-[30px] items-start border-b-4 border-[#3f4453] pt-1 pl-[17px]">
      <div className="relative flex h-[22px] w-[124px] items-center">
        <svg viewBox="0 0 134 22" className="absolute top-0 left-0 h-[22px] w-[134px]" aria-hidden="true"><path d="M0 22C6 20 6 0 14 0H122C130 0 128 22 134 22Z" fill="#2f3643" /></svg>
        <button type="button" className="relative pt-0.5 pl-[15px] text-[#bcc1c9]">开始</button>
      </div>
      <div className="relative flex h-[22px] w-[129px] items-center">
        <svg viewBox="0 0 134 22" className="absolute top-0 left-0 h-[22px] w-[134px]" aria-hidden="true"><path d="M0 22C6 20 6 0 14 0H120C128 0 128 22 134 22Z" fill="#3f4453" /></svg>
        <button type="button" className="relative pt-0.5 pl-[14px] font-bold text-white">Drawing1*</button>
        <button type="button" aria-label="关闭图形" className="relative ml-auto pt-0.5 pr-[15px]"><Icon w={8}><path d="M1 1L7 7M7 1L1 7" strokeWidth="1.500" /></Icon></button>
      </div>
      <button type="button" aria-label="新图形" className="ml-[11px] flex h-[22px] items-center pt-0.5"><Icon w={9}><path d="M4.500 0V9M0 4.500H9" strokeWidth="1.500" /></Icon></button>
    </div>
  );
}

function ViewCube() {
  return (
    <div className="absolute top-[38px] right-[14px] flex w-[138px] flex-col items-center">
      <div className="relative grid h-[136px] w-full grid-cols-3 grid-rows-3 place-items-center text-[18px] leading-5 text-[#a3a5a9]">
        <svg viewBox="0 0 120 120" className="absolute top-2 left-[9px] h-[120px] w-[120px]" aria-hidden="true"><circle cx="60" cy="60" r="53.500" fill="none" stroke="#2a2a2c" strokeWidth="13" /></svg>
        <span className="relative col-start-2 row-start-1 self-start pt-0.5">北</span>
        <span className="relative col-start-1 row-start-2 justify-self-start pt-0.5 pl-[3px]">西</span>
        <button type="button" className="relative col-start-2 row-start-2 flex h-[52px] w-[52px] items-center justify-center border border-[#aaabae] bg-[#9b9c9f]">
          <span className="flex h-8 w-8 items-center justify-center rounded-sm bg-[#8d8e91] text-[30px] leading-8 font-light text-[#505154]">上</span>
        </button>
        <span className="relative col-start-3 row-start-2 justify-self-end pt-0.5 pr-1">东</span>
        <span className="relative col-start-2 row-start-3 self-end">南</span>
      </div>
      <button type="button" className="mt-[19px] flex h-[18px] w-12 items-center justify-between rounded-[4px] border border-[#8a8c94] bg-[#7c7e86] px-1 pb-px text-[11px] leading-4 text-[#3d3f46]">
        WCS<Icon w={8} h={5}><path d="M.5 .5H7.500L4 4.500Z" stroke="#999ba2" /></Icon>
      </button>
    </div>
  );
}

function NavBar() {
  const s = "#222527";
  return (
    <div className="absolute top-[236px] right-1 flex h-[212px] w-8 flex-col items-center rounded-[4px] border border-[#454849] bg-[#3b3e40]">
      <svg width="30" height="210" viewBox="0 0 30 210" fill="none" stroke={s} aria-hidden="true">
        <path d="M22 3L27 8M27 3L22 8M21 8H28" strokeWidth=".8" />
        <path d="M15 19H25.500V29C25.500 45 4.500 45 4.500 29C4.500 23 9 19 15 19Z" /><circle cx="15" cy="29.500" r="5.500" /><circle cx="15" cy="29.500" r="8.500" strokeWidth=".7" />
        <path d="M13 49H18L15.500 52ZM13 119H18L15.500 122ZM13 157H18L15.500 160Z" fill={s} stroke="none" />
        <path d="M0 56.500H30" stroke="#33363a" />
        <path d="M9 80C5 76 3 72 4 71C6 70 8 73 9 75L7 65C8 62 10 64 10 66L12 72L12 62C13 60 15 61 15 63L16 71L18 62C19 60 21 62 20 65L19 73L23 67C25 66 26 68 24 71C23 76 22 81 18 82C15 83 11 83 9 80Z" />
        <path d="M4 88L19 102M19 87L4 101M4 92V88H8M15 87H19V91M4 97V101H8" /><circle cx="20" cy="103" r="5" /><path d="M23 107L27 111" strokeWidth="3" />
        <path d="M13 146V132H11L15 127L19 132H17V146Z" /><path d="M10 136C-2 139 4 145 15 144C30 143 28 137 20 136M12 140L8 144L12 148" />
        <path d="M0 164.500H30" stroke="#33363a" />
        <path d="M4 168.500H10V174H4ZM12 168.500H18V174H12ZM20 168.500H26V174H20ZM4 179H20V191H4Z" /><path d="M9 181V189L15 185Z" fill={s} />
        <circle cx="24.500" cy="204" r="3.500" strokeWidth=".8" /><path d="M23 203H26L24.500 205Z" fill={s} />
      </svg>
    </div>
  );
}

function CommandLine({ text }: { text: string }) {
  const parts = text.split(/([\u4e00-\u9fff]+)/).filter(Boolean);
  return (
    <p className="h-[15px] w-fit bg-[#323335] px-0.5 font-['Liberation_Mono','Noto_Sans_CJK_SC',monospace] text-[12px] leading-[15px] whitespace-pre text-[#8d8f91]">
      {parts.map((p, i) => (/[\u4e00-\u9fff]/.test(p) ? <span key={i} className="text-[13px]">{p}</span> : p))}
    </p>
  );
}

function Canvas() {
  return (
    <main className="relative mx-[3px] min-h-0 flex-1 overflow-hidden bg-black">
      <svg width="289" height="128" className="absolute top-[350px] left-[670px]" aria-label="矩形多段线"><rect x=".5" y=".5" width="288" height="127" fill="none" stroke="#fff" /></svg>
      <div className="absolute top-[3px] right-1.5 flex text-white">
        <IconButton label="最小化图形" width="w-5"><Icon w={10}><rect y="6" width="10" height="3" fill="#e9e9e9" stroke="none" /></Icon></IconButton>
        <IconButton label="还原图形" width="w-5"><Icon w={10}><path d="M3 1H9V8" stroke="#e9e9e9" strokeWidth="1.300" /><rect x="1" y="3" width="6" height="6" stroke="#fff" strokeWidth="2" /></Icon></IconButton>
        <IconButton label="关闭图形窗口" width="w-5"><Icon w={10}><path d="M1.500 1L8.500 9M8.500 1L1.500 9" stroke="#fff" strokeWidth="2" /><path d="M0 1H3.500M6.500 1H10M0 9H3.500M6.500 9H10" stroke="#e9e9e9" strokeWidth="1" /></Icon></IconButton>
      </div>
      <ViewCube />
      <NavBar />
      <svg width="20" height="50" viewBox="0 0 20 50" fill="none" stroke="#fff" className="absolute bottom-[-3px] left-5" shapeRendering="crispEdges" aria-hidden="true">
        <path d="M2 0L8.500 6.500L15 0M8.500 6V13M.5 17V50" />
      </svg>
      <div className="absolute bottom-[-11px] left-[449px] flex flex-col gap-[5px]">
        <CommandLine text="指定第一个角点或 [倒角(C)/标高(E)/圆角(F)/厚度(T)/宽度(W)]:" />
        <CommandLine text="指定另一个角点或 [面积(A)/尺寸(D)/旋转(R)]:" />
      </div>
    </main>
  );
}

export default function App() {
  return (
    <div className="flex h-screen flex-col overflow-hidden border-r border-l-2 border-r-[#0f82ad] border-l-[#3aa3b8] bg-[#222831] font-['Noto_Sans','Noto_Sans_CJK_SC',sans-serif] text-[12px] leading-4">
      <TitleBar />
      <RibbonTabs />
      <Ribbon />
      <FileTabs />
      <Canvas />
    </div>
  );
}
